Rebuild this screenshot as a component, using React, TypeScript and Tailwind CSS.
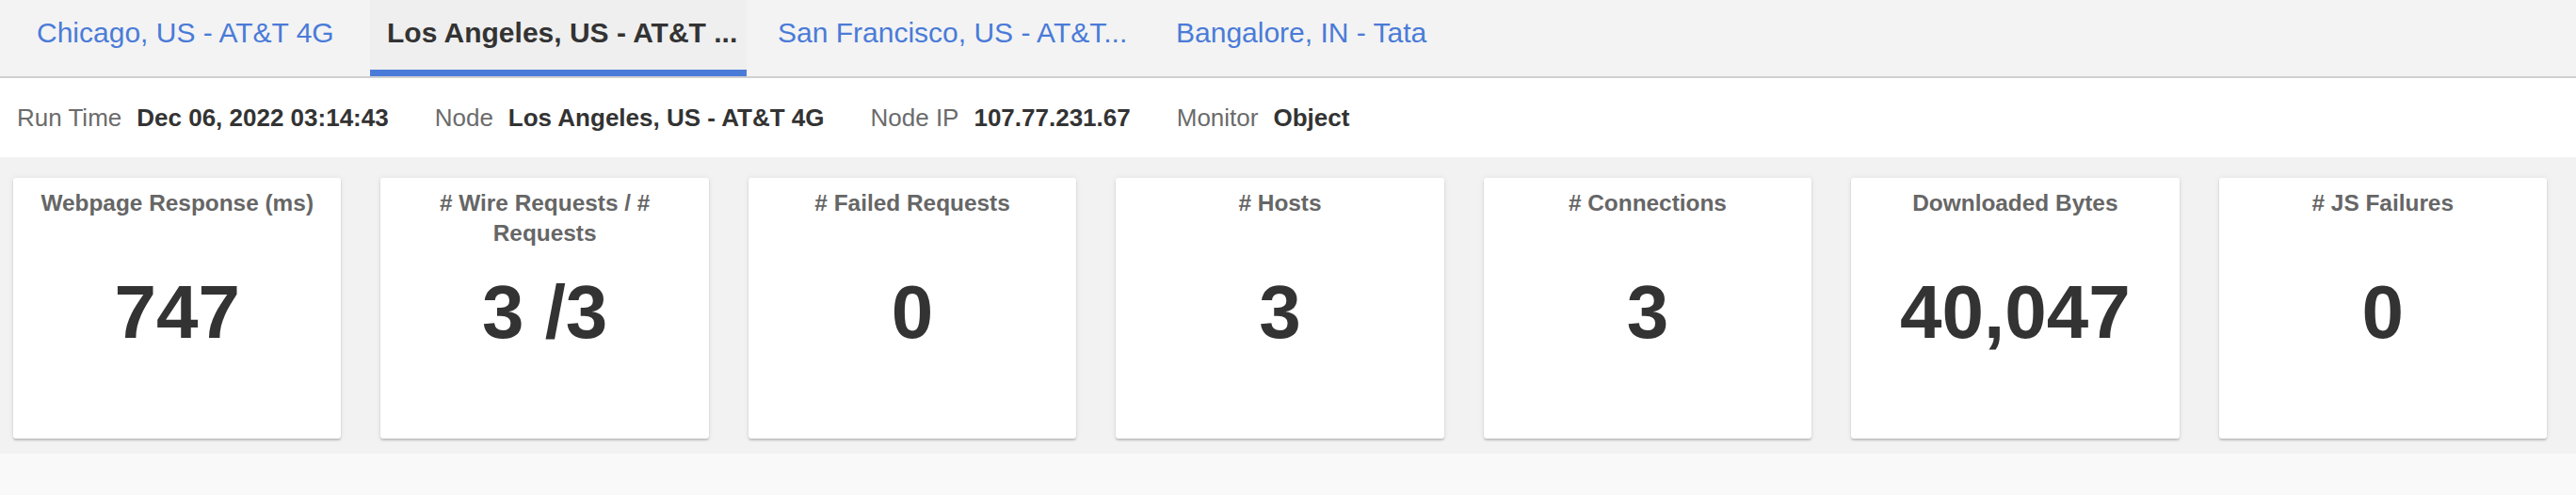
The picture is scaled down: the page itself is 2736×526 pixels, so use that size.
import React from "react";

const font = { fontFamily: '"Liberation Sans", Arial, Helvetica, sans-serif' };

const metrics: { title: string; value: string }[] = [
  { title: "Webpage Response (ms)", value: "747" },
  { title: "# Wire Requests / # Requests", value: "3 /3" },
  { title: "# Failed Requests", value: "0" },
  { title: "# Hosts", value: "3" },
  { title: "# Connections", value: "3" },
  { title: "Downloaded Bytes", value: "40,047" },
  { title: "# JS Failures", value: "0" },
];

export default function App() {
  return (
    <div className="w-[2736px] h-[526px] flex flex-col bg-white overflow-hidden" style={font}>
      {/* Tabs */}
      <div className="h-[83px] flex bg-[#f3f3f3] border-b-2 border-[#cfcfcf] text-[30px] leading-[34px] whitespace-nowrap">
        <div className="ml-[21px] w-[352px] pl-[18px] pt-[18px] text-[#4a7bd8]">Chicago, US - AT&amp;T 4G</div>
        <div className="ml-[20px] w-[400px] flex flex-col bg-[#efefef]">
          <div className="pl-[18px] pt-[18px] font-bold text-[#333333]">Los Angeles, US - AT&amp;T ...</div>
          <div className="mt-auto h-[7px] bg-[#4a7bd8]" />
        </div>
        <div className="ml-[15px] w-[400px] pl-[18px] pt-[18px] text-[#4a7bd8]">San Francisco, US - AT&amp;T...</div>
        <div className="ml-[23px] pl-[18px] pt-[18px] text-[#4a7bd8]">Bangalore, IN - Tata</div>
      </div>

      {/* Meta row */}
      <div className="h-[84px] flex items-center pl-[18px] gap-[49px] text-[26px] whitespace-nowrap">
        {[
          ["Run Time", "Dec 06, 2022 03:14:43"],
          ["Node", "Los Angeles, US - AT&T 4G"],
          ["Node IP", "107.77.231.67"],
          ["Monitor", "Object"],
        ].map(([k, v]) => (
          <div key={k} className="flex items-center gap-[16px]">
            <span className="text-[#6b6b6b]">{k}</span>
            <span className="font-bold text-[#333333]">{v}</span>
          </div>
        ))}
      </div>

      {/* Cards */}
      <div className="bg-[#f2f2f2] pt-[22px] pb-[16px] pl-[14px] pr-[31px] grid grid-cols-7 gap-[42px]">
        {metrics.map((m) => (
          <div
            key={m.title}
            className="h-[277px] bg-white rounded-[3px] shadow-[0_2px_2px_rgba(0,0,0,0.18),0_0_6px_rgba(0,0,0,0.08)] pt-[11px] px-[20px] flex flex-col items-center text-center"
          >
            <div className="h-[64px] text-[24.4px] leading-[32px] font-bold text-[#666666]">{m.title}</div>
            <div className="mt-[28px] text-[80px] leading-[80px] font-bold text-[#333333]">{m.value}</div>
          </div>
        ))}
      </div>

      <div className="flex-1 bg-[#f9f9f9]" />
    </div>
  );
}
